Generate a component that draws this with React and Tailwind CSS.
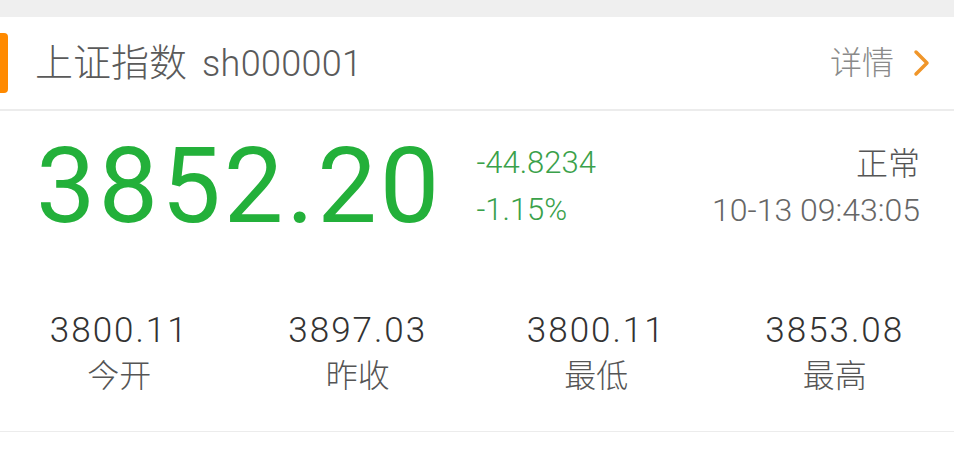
import React from 'react';

const stats = [
  { value: '3800.11', label: '今开' },
  { value: '3897.03', label: '昨收' },
  { value: '3800.11', label: '最低' },
  { value: '3853.08', label: '最高' },
];

const font = { fontFamily: 'Roboto, "Noto Sans CJK SC", sans-serif' };

export default function App() {
  return (
    <div className="w-[954px] h-[457px] bg-white overflow-hidden" style={font}>
      {/* top gap */}
      <div className="h-[17px] bg-[#efefef]" />

      {/* Header */}
      <div className="h-[94px] flex items-center justify-between border-b-2 border-[#ececec]">
        <div className="flex items-center">
          <div className="w-[8px] h-[60px] bg-[#ff8a00] rounded-r-[4px]" />
          <div className="ml-[27px] flex items-baseline text-[#5a5a5a] leading-none">
            <span className="text-[38px] font-light">上证指数</span>
            <span className="ml-[15px] text-[36px] font-light tracking-[0.3px]">sh000001</span>
          </div>
        </div>
        <div className="flex items-center pr-[22px]">
          <span className="text-[32px] text-[#8a8a8a] leading-none font-light">详情</span>
          <svg className="ml-[18px]" width="20" height="30" viewBox="0 0 20 30" fill="none">
            <path d="M4 4 L15 15 L4 26" stroke="#f0962a" strokeWidth="3.5" strokeLinecap="round" strokeLinejoin="round" />
          </svg>
        </div>
      </div>

      {/* Price area */}
      <div className="h-[321px] border-b border-[#ececec] flex flex-col">
        <div className="flex items-start justify-between pt-[22px] pl-[36px] pr-[34px]">
          <div className="flex items-center">
            <span className="text-[106px] leading-none text-[#23b03a] tracking-[3px]">3852.20</span>
            <div className="ml-[34px] flex flex-col text-[31px] leading-none text-[#3aa14a] gap-[16px] font-light">
              <span>-44.8234</span>
              <span>-1.15%</span>
            </div>
          </div>
          <div className="flex flex-col items-end text-[#666] leading-none pt-[15px] gap-[14px] font-light">
            <span className="text-[32px] text-[#555]">正常</span>
            <span className="text-[32px]">10-13 09:43:05</span>
          </div>
        </div>

        <div className="grid grid-cols-4 mt-[74px]">
          {stats.map((s, i) => (
            <div key={i} className="flex flex-col items-center leading-none">
              <span className="text-[35px] text-[#333] tracking-[2px] font-light">{s.value}</span>
              <span className="mt-[12px] text-[32px] text-[#555] font-light">{s.label}</span>
            </div>
          ))}
        </div>
      </div>
    </div>
  );
}
